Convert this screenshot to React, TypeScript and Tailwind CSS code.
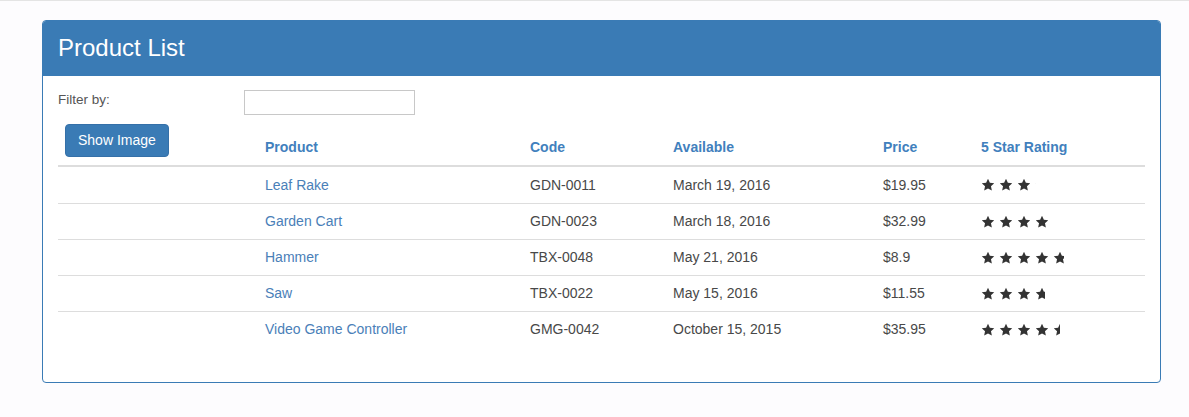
import React from "react";

type Product = {
  name: string;
  code: string;
  available: string;
  price: string;
  rating: number;
};

const products: Product[] = [
  { name: "Leaf Rake", code: "GDN-0011", available: "March 19, 2016", price: "$19.95", rating: 3.2 },
  { name: "Garden Cart", code: "GDN-0023", available: "March 18, 2016", price: "$32.99", rating: 4.2 },
  { name: "Hammer", code: "TBX-0048", available: "May 21, 2016", price: "$8.9", rating: 4.8 },
  { name: "Saw", code: "TBX-0022", available: "May 15, 2016", price: "$11.55", rating: 3.7 },
  { name: "Video Game Controller", code: "GMG-0042", available: "October 15, 2015", price: "$35.95", rating: 4.6 },
];

const Star = () => (
  <span className="flex w-[18px] shrink-0">
    <svg width="14" height="14" viewBox="0 0 24 24" className="block">
      <path
        d="M12 1.2l3.2 6.9 7.5.9-5.6 5.1 1.5 7.5L12 17.8l-6.6 3.8 1.5-7.5L1.3 9l7.5-.9L12 1.2z"
        fill="#333333"
      />
    </svg>
  </span>
);

const Stars = ({ rating }: { rating: number }) => (
  <div className="overflow-hidden" style={{ width: `${(rating / 5) * 86}px` }}>
    <div className="flex w-[90px]">
      <Star />
      <Star />
      <Star />
      <Star />
      <Star />
    </div>
  </div>
);

const cols = "grid grid-cols-[199px_265px_143px_210px_98px_1fr]";

export default function App() {
  return (
    <div
      className="min-h-[417px] bg-[#fdfcfe] border-t border-[#e4e4e4] pt-[19px] pl-[42px] pr-[28px] text-[14px] text-[#484848]"
      style={{ fontFamily: '"Liberation Sans", Arial, Helvetica, sans-serif' }}
    >
      <div className="border border-[#3a7bb5] rounded-[4px] bg-white overflow-hidden">
        <div className="h-[55px] bg-[#3a7bb5] flex items-center pl-[15px] pb-[2px]">
          <h3 className="text-[24px] leading-none text-white">Product List</h3>
        </div>
        <div className="px-[15px] pt-[14px] pb-[35px]">
          <div className="flex h-[25px]">
            <div className="w-[186px] leading-[20px] text-[13.5px] text-[#555]">Filter by:</div>
            <input
              type="text"
              className="w-[171px] h-[25px] border border-[#c8c8c8] bg-white outline-none"
            />
          </div>
          <div className={`${cols} pt-[9px] border-b-2 border-[#dddddd] items-end font-bold text-[#4180bd]`}>
            <div className="px-[7px] pb-[8px]">
              <button className="h-[33px] px-[12px] rounded-[4px] bg-[#3a7bb5] border border-[#3570a8] text-white font-normal text-[14px]">
                Show Image
              </button>
            </div>
            <div className="px-2 pb-[8px] leading-[20px]">Product</div>
            <div className="px-2 pb-[8px] leading-[20px]">Code</div>
            <div className="px-2 pb-[8px] leading-[20px]">Available</div>
            <div className="px-2 pb-[8px] leading-[20px]">Price</div>
            <div className="px-2 pb-[8px] leading-[20px]">5 Star Rating</div>
          </div>
          {products.map((p, i) => (
            <div
              key={p.code}
              className={`${cols} h-[36px] items-center ${i > 0 ? "border-t border-[#dddddd]" : ""}`}
            >
              <div className="px-2" />
              <div className="px-2 text-[#4a80b8]">{p.name}</div>
              <div className="px-2">{p.code}</div>
              <div className="px-2">{p.available}</div>
              <div className="px-2">{p.price}</div>
              <div className="px-2">
                <Stars rating={p.rating} />
              </div>
            </div>
          ))}
        </div>
      </div>
    </div>
  );
}
